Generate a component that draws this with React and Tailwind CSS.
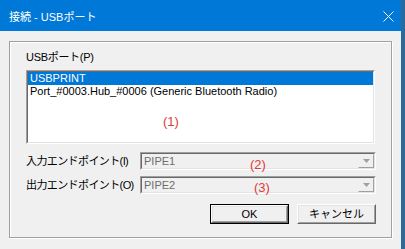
import React from 'react';

const font = { fontFamily: '"Liberation Sans", "Noto Sans CJK JP", sans-serif' };

const Sunken = ({ className, children }) => (
    <div className={`border border-t-[#a0a0a0] border-l-[#a0a0a0] border-b-white border-r-white ${className}`}>
        <div className="relative h-full border border-t-[#696969] border-l-[#696969] border-b-[#e3e3e3] border-r-[#e3e3e3]">
            {children}
        </div>
    </div>
);

const Button = ({ label, isDefault }) => (
    <div className={`w-[79px] h-[20px] ${isDefault ? 'border border-black' : ''}`}>
        <div className="h-full border border-t-white border-l-white border-b-[#696969] border-r-[#696969]">
            <div className="h-full flex items-center justify-center border border-t-[#e3e3e3] border-l-[#e3e3e3] border-b-[#a0a0a0] border-r-[#a0a0a0] bg-[#f0f0f0] text-[11px] text-black">
                {label}
            </div>
        </div>
    </div>
);

const Combo = ({ label, value, note, noteLeft, noteTop }) => (
    <div className="flex items-center h-[18px]">
        <span className="whitespace-nowrap text-[11px] tracking-[-0.6px] text-black leading-[14px]">{label}</span>
        <Sunken className="ml-auto shrink-0 w-[236px] h-[18px] bg-[#f0f0f0]">
            <div className="flex items-center h-full">
                <span className="pl-[2px] text-[11px] text-[#6d6d6d] leading-[14px]">{value}</span>
                <div className="ml-auto w-[16px] h-[14px] border border-t-[#f0f0f0] border-l-[#f0f0f0] border-b-[#a0a0a0] border-r-[#a0a0a0] flex items-center justify-center">
                    <svg width="7" height="4" viewBox="0 0 7 4">
                        <path d="M0 0 H7 L3.5 4 Z" fill="#a0a0a0" />
                    </svg>
                </div>
            </div>
            <span className={`absolute text-[13px] text-[#e03a3a] leading-[14px] ${noteLeft} ${noteTop}`}>{note}</span>
        </Sunken>
    </div>
);

const App = () => {
    return (
        <div className="w-[405px] h-[249px] flex bg-[#f0f0f0] overflow-hidden" style={font}>
            <div className="w-[401px] flex flex-col">
                <div className="h-[31px] bg-[#0078d7] flex items-center justify-between pl-[9px] pr-[7px] text-white">
                    <span className="text-[11px] leading-[14px] mt-[2px]">接続 - USBポート</span>
                    <svg width="11" height="11" viewBox="0 0 11 11" className="mt-[1px]">
                        <path d="M0.5 0.5 L10.5 10.5 M10.5 0.5 L0.5 10.5" stroke="#fff" strokeWidth="1" />
                    </svg>
                </div>
                <div className="flex-1 pt-[10px] px-[9px]">
                    <div className="h-[197px] border border-[#a0a0a0] shadow-[inset_1px_1px_0_#fff,1px_1px_0_#fff]">
                        <div className="w-[350px] ml-[16px] pt-[8px] flex flex-col">
                            <span className="text-[11px] tracking-[-0.3px] leading-[14px] text-black">USBポート(P)</span>
                            <Sunken className="mt-[6px] w-[349px] h-[74px] bg-white">
                                <div className="h-[13px] bg-[#0078d7] text-white text-[11px] leading-[13px] pl-[2px]">USBPRINT</div>
                                <div className="h-[13px] text-black text-[11px] leading-[13px] pl-[2px]">Port_#0003.Hub_#0006 (Generic Bluetooth Radio)</div>
                                <span className="absolute left-[135px] top-[43px] text-[13px] text-[#e03a3a] leading-[14px]">(1)</span>
                            </Sunken>
                            <div className="mt-[8px]">
                                <Combo label="入力エンドポイント(I)" value="PIPE1" note="(2)" noteLeft="left-[108px]" noteTop="top-[4px]" />
                            </div>
                            <div className="mt-[6px]">
                                <Combo label="出力エンドポイント(O)" value="PIPE2" note="(3)" noteLeft="left-[112px]" noteTop="top-[3px]" />
                            </div>
                            <div className="mt-[10px] flex justify-end gap-[8px]">
                                <Button label="OK" isDefault />
                                <Button label="キャンセル" />
                            </div>
                        </div>
                    </div>
                </div>
            </div>
            <div className="w-[4px] bg-[#2b6a9a]" />
        </div>
    );
};

export default App;
